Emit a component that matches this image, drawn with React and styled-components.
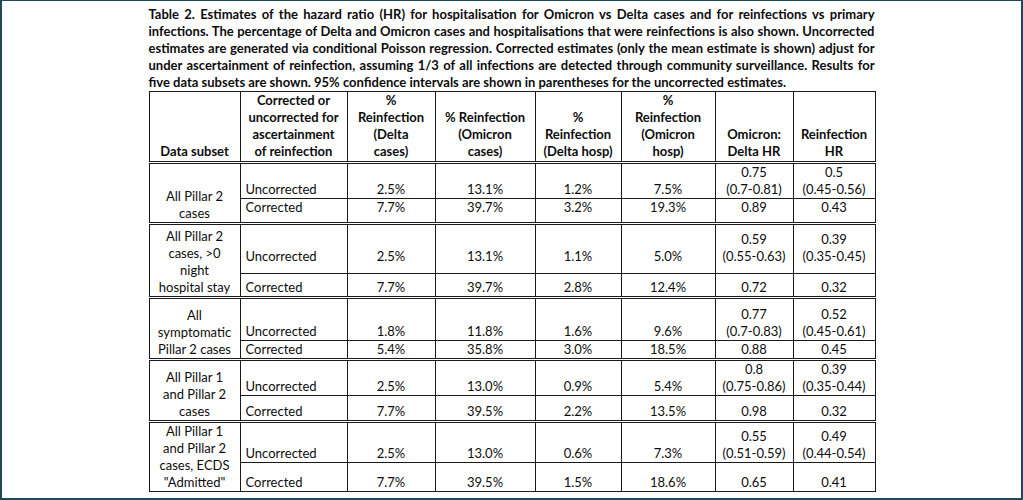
import styled, { createGlobalStyle } from 'styled-components';

const GlobalStyle = createGlobalStyle`
  html, body {
    margin: 0;
    padding: 0;
    background: #fff;
  }
  body {
    font-family: Lato, "Liberation Sans", sans-serif;
    color: #111;
  }
`;

const Frame = styled.div`
  box-sizing: border-box;
  width: 1023px;
  height: 500px;
  border: 2px solid #1c4a5a;
  border-top-width: 1px;
  background: #fff;
  padding-top: 5px;
  display: flex;
  flex-direction: column;
  align-items: center;
`;

const Content = styled.div`
  width: 726px;
`;

const Caption = styled.div`
  font-weight: 700;
  font-size: 13px;
  line-height: 17px;
  color: #0d0d0d;
`;

const CaptionLine = styled.div`
  text-align: justify;
  text-align-last: ${p => (p.$last ? 'left' : 'justify')};
  white-space: nowrap;
`;

const Table = styled.table`
  border-collapse: collapse;
  table-layout: fixed;
  width: 726px;
  font-size: 13px;
  line-height: 17px;
  color: #0d0d0d;
`;

const HeadCell = styled.th`
  border: 1px solid #1a1a1a;
  border-bottom: 3px double #1a1a1a;
  font-weight: 700;
  text-align: center;
  vertical-align: bottom;
  padding: 0 3px 1px;
  height: 68px;
`;

const Row = styled.tr`
  height: ${p => p.$h}px;
`;

const Cell = styled.td`
  border-left: 1px solid #1a1a1a;
  border-right: 1px solid #1a1a1a;
  border-top: 1px solid #1a1a1a;
  border-bottom: ${p => (p.$groupEnd ? '3px double #1a1a1a' : '1px solid #1a1a1a')};
  text-align: ${p => (p.$left ? 'left' : 'center')};
  vertical-align: bottom;
  padding: 0 2px 0 ${p => (p.$left ? '5px' : '2px')};
  padding-bottom: ${p => p.$pb}px;
  white-space: nowrap;
`;

const Line = styled.div``;

const cols = [91, 107, 88, 100, 86, 94, 78, 82];

const headers = [
  ['Data subset'],
  ['Corrected or', 'uncorrected for', 'ascertainment', 'of reinfection'],
  ['%', 'Reinfection', '(Delta', 'cases)'],
  ['% Reinfection', '(Omicron', 'cases)'],
  ['%', 'Reinfection', '(Delta hosp)'],
  ['%', 'Reinfection', '(Omicron', 'hosp)'],
  ['Omicron:', 'Delta HR'],
  ['Reinfection', 'HR'],
];

const groups = [
  {
    subset: ['All Pillar 2', 'cases'],
    rows: [
      { h: 34, pb: 0, label: 'Uncorrected', vals: ['2.5%', '13.1%', '1.2%', '7.5%'], hr: ['0.75', '(0.7-0.81)'], rr: ['0.5', '(0.45-0.56)'] },
      { h: 23, pb: 6, label: 'Corrected', vals: ['7.7%', '39.7%', '3.2%', '19.3%'], hr: ['0.89'], rr: ['0.43'] },
    ],
  },
  {
    subset: ['All Pillar 2', 'cases, >0', 'night', 'hospital stay'],
    rows: [
      { h: 50, pb: 8, label: 'Uncorrected', vals: ['2.5%', '13.1%', '1.1%', '5.0%'], hr: ['0.59', '(0.55-0.63)'], rr: ['0.39', '(0.35-0.45)'] },
      { h: 24, pb: 0, label: 'Corrected', vals: ['7.7%', '39.7%', '2.8%', '12.4%'], hr: ['0.72'], rr: ['0.32'] },
    ],
  },
  {
    subset: ['All', 'symptomatic', 'Pillar 2 cases'],
    rows: [
      { h: 43, pb: 0, label: 'Uncorrected', vals: ['1.8%', '11.8%', '1.6%', '9.6%'], hr: ['0.77', '(0.7-0.83)'], rr: ['0.52', '(0.45-0.61)'] },
      { h: 18, pb: 0, label: 'Corrected', vals: ['5.4%', '35.8%', '3.0%', '18.5%'], hr: ['0.88'], rr: ['0.45'] },
    ],
  },
  {
    subset: ['All Pillar 1', 'and Pillar 2', 'cases'],
    rows: [
      { h: 36, pb: 0, label: 'Uncorrected', vals: ['2.5%', '13.0%', '0.9%', '5.4%'], hr: ['0.8', '(0.75-0.86)'], rr: ['0.39', '(0.35-0.44)'] },
      { h: 26, pb: 0, label: 'Corrected', vals: ['7.7%', '39.5%', '2.2%', '13.5%'], hr: ['0.98'], rr: ['0.32'] },
    ],
  },
  {
    subset: ['All Pillar 1', 'and Pillar 2', 'cases, ECDS', '"Admitted"'],
    rows: [
      { h: 40, pb: 0, label: 'Uncorrected', vals: ['2.5%', '13.0%', '0.6%', '7.3%'], hr: ['0.55', '(0.51-0.59)'], rr: ['0.49', '(0.44-0.54)'] },
      { h: 29, pb: 0, label: 'Corrected', vals: ['7.7%', '39.5%', '1.5%', '18.6%'], hr: ['0.65'], rr: ['0.41'] },
    ],
  },
];

const captionLines = [
  'Table 2. Estimates of the hazard ratio (HR) for hospitalisation for Omicron vs Delta cases and for reinfections vs primary',
  'infections. The percentage of Delta and Omicron cases and hospitalisations that were reinfections is also shown. Uncorrected',
  'estimates are generated via conditional Poisson regression. Corrected estimates (only the mean estimate is shown) adjust for',
  'under ascertainment of reinfection, assuming 1/3 of all infections are detected through community surveillance. Results for',
  'five data subsets are shown. 95% confidence intervals are shown in parentheses for the uncorrected estimates.',
];

const Lines = ({ items }) => items.map(t => <Line key={t}>{t}</Line>);

export default function App() {
  return (
    <>
      <GlobalStyle />
      <Frame>
        <Content>
          <Caption>
            {captionLines.map((l, i) => (
              <CaptionLine key={i} $last={i === captionLines.length - 1}>
                {l}
              </CaptionLine>
            ))}
          </Caption>
          <Table>
            <colgroup>
              {cols.map((w, i) => (
                <col key={i} style={{ width: w }} />
              ))}
            </colgroup>
            <thead>
              <tr>
                {headers.map((h, i) => (
                  <HeadCell key={i}>
                    <Lines items={h} />
                  </HeadCell>
                ))}
              </tr>
            </thead>
            <tbody>
              {groups.map((g, gi) =>
                g.rows.map((r, ri) => {
                  const end = ri === 1 && gi < groups.length - 1;
                  return (
                    <Row key={`${gi}-${ri}`} $h={r.h}>
                      {ri === 0 && (
                        <Cell rowSpan={2} $pb={0} $groupEnd={gi < groups.length - 1}>
                          <Lines items={g.subset} />
                        </Cell>
                      )}
                      <Cell $left $pb={r.pb} $groupEnd={end}>
                        {r.label}
                      </Cell>
                      {r.vals.map((v, vi) => (
                        <Cell key={vi} $pb={r.pb} $groupEnd={end}>
                          {v}
                        </Cell>
                      ))}
                      <Cell $pb={r.pb} $groupEnd={end}>
                        <Lines items={r.hr} />
                      </Cell>
                      <Cell $pb={r.pb} $groupEnd={end}>
                        <Lines items={r.rr} />
                      </Cell>
                    </Row>
                  );
                })
              )}
            </tbody>
          </Table>
        </Content>
      </Frame>
    </>
  );
}
